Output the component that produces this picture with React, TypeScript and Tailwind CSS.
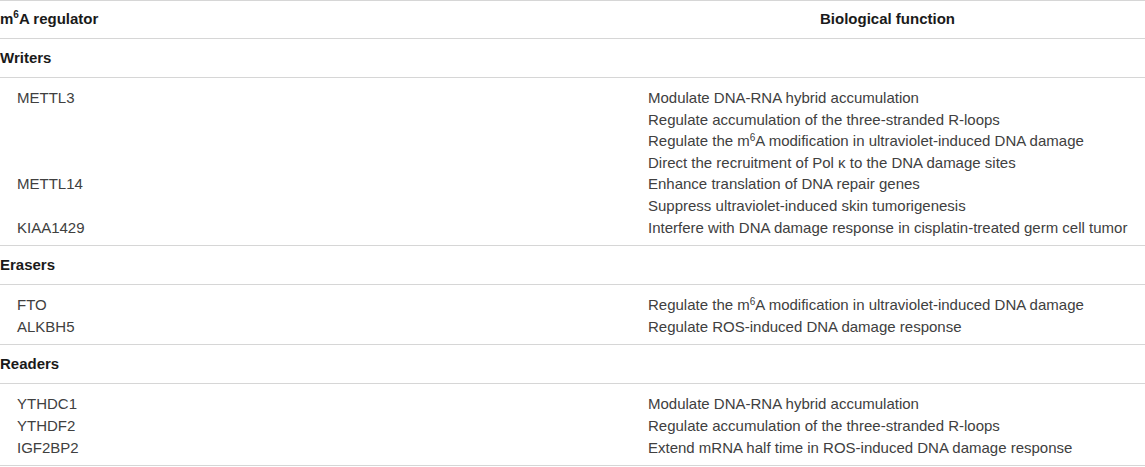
const groups = [
  {
    name: "Writers",
    rows: [
      { reg: "METTL3", funcs: ["Modulate DNA-RNA hybrid accumulation", "Regulate accumulation of the three-stranded R-loops", "m6A", "Direct the recruitment of Pol κ to the DNA damage sites"] },
      { reg: "METTL14", funcs: ["Enhance translation of DNA repair genes", "Suppress ultraviolet-induced skin tumorigenesis"] },
      { reg: "KIAA1429", funcs: ["Interfere with DNA damage response in cisplatin-treated germ cell tumor"] },
    ],
  },
  {
    name: "Erasers",
    rows: [
      { reg: "FTO", funcs: ["m6A"] },
      { reg: "ALKBH5", funcs: ["Regulate ROS-induced DNA damage response"] },
    ],
  },
  {
    name: "Readers",
    rows: [
      { reg: "YTHDC1", funcs: ["Modulate DNA-RNA hybrid accumulation"] },
      { reg: "YTHDF2", funcs: ["Regulate accumulation of the three-stranded R-loops"] },
      { reg: "IGF2BP2", funcs: ["Extend mRNA half time in ROS-induced DNA damage response"] },
    ],
  },
];

function Func({ text }: { text: string }) {
  if (text === "m6A") {
    return (
      <div>
        Regulate the m<sup className="text-[10px] -top-[5px]">6</sup>A modification in ultraviolet-induced DNA damage
      </div>
    );
  }
  return <div>{text}</div>;
}

export default function App() {
  return (
    <div className="w-[1145px] h-[467px] overflow-hidden bg-white font-['Liberation_Sans',Arial,sans-serif]">
      {/* header */}
      <div className="flex h-[39px] items-center border-t border-b border-[#d6d6d6] text-[15px] font-bold text-[#1a1a1a]">
        <div className="w-[630px]">
          m<sup className="text-[10px] -top-[6px]">6</sup>A regulator
        </div>
        <div className="flex-1 text-center">Biological function</div>
      </div>

      {groups.map((g) => (
        <div key={g.name}>
          <div className="flex h-[39px] items-center border-b border-[#d6d6d6] text-[15px] font-bold text-[#1a1a1a]">
            {g.name}
          </div>
          <div className="border-b border-[#d6d6d6] pt-[9px] pb-[7px] text-[15px] leading-[21.6px] text-[#404040] whitespace-nowrap">
            {g.rows.map((r) => (
              <div key={r.reg} className="flex">
                <div className="w-[648px] pl-[17px]">{r.reg}</div>
                <div className="flex-1">
                  {r.funcs.map((f, i) => (
                    <Func key={i} text={f} />
                  ))}
                </div>
              </div>
            ))}
          </div>
        </div>
      ))}
    </div>
  );
}
